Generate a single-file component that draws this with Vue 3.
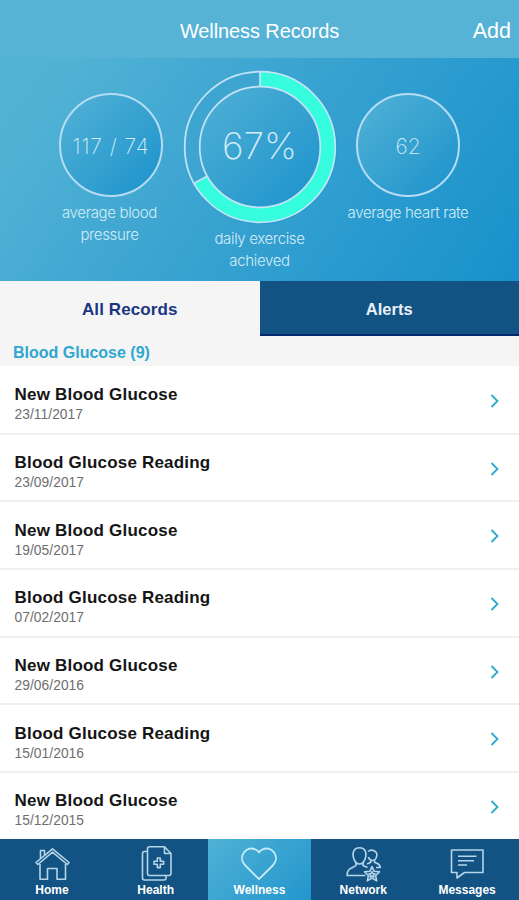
<template>
  <div class="app">
    <div class="top">
      <header class="header">
        <span></span>
        <h1>Wellness Records</h1>
        <a class="header__add">Add</a>
      </header>
      <section class="stats">
        <div class="stat">
          <div class="stat__circle"><span class="stat__pressure">117 / 74</span></div>
          <p class="stat__pressure-label">average blood<br />pressure</p>
        </div>
        <div class="stat stat--main">
          <div class="stat__ring">
            <svg viewBox="0 0 154 154" width="154" height="154" fill="none">
              <circle
                cx="77"
                cy="77"
                r="68"
                stroke="#35fddd"
                stroke-width="15"
                pathLength="100"
                :stroke-dasharray="`${exercise} 100`"
                transform="rotate(-90 77 77)"
              />
              <g stroke="#c4e4f6" stroke-width="1.7">
                <circle cx="77" cy="77" r="75.3" />
                <circle cx="77" cy="77" r="60.3" />
                <path d="M77 2V17" />
                <path d="M77 2V17" :transform="`rotate(${exercise * 3.6} 77 77)`" />
              </g>
            </svg>
            <span>{{ exercise }}%</span>
          </div>
          <p>daily exercise<br />achieved</p>
        </div>
        <div class="stat">
          <div class="stat__circle"><span>62</span></div>
          <p>average heart rate</p>
        </div>
      </section>
    </div>

    <div class="tabs">
      <div class="tabs__item tabs__item--active">All Records</div>
      <div class="tabs__item">Alerts</div>
    </div>

    <h2 class="group">Blood Glucose (9)</h2>
    <ul class="records">
      <li v-for="record in records" :key="record.date">
        <div>
          <h3>{{ record.title }}</h3>
          <p>{{ record.date }}</p>
        </div>
        <svg width="10" height="16" viewBox="0 0 10 16" fill="none" stroke="#2ba9cd" stroke-width="1.8">
          <path d="M1.5 2L7.5 8L1.5 14" />
        </svg>
      </li>
    </ul>

    <nav class="nav">
      <a
        v-for="item in nav"
        :key="item.name"
        class="nav__item"
        :class="{ 'nav__item--active': item.name == active }"
      >
        <svg width="40" height="38" viewBox="0 0 40 38">
          <path v-for="d in item.paths" :key="d" :d="d" />
        </svg>
        <span>{{ item.name }}</span>
      </a>
    </nav>
  </div>
</template>

<script setup>
import { ref } from "vue";

const exercise = ref(67);
const active = ref("Wellness");

const records = [
  { title: "New Blood Glucose", date: "23/11/2017" },
  { title: "Blood Glucose Reading", date: "23/09/2017" },
  { title: "New Blood Glucose", date: "19/05/2017" },
  { title: "Blood Glucose Reading", date: "07/02/2017" },
  { title: "New Blood Glucose", date: "29/06/2016" },
  { title: "Blood Glucose Reading", date: "15/01/2016" },
  { title: "New Blood Glucose", date: "15/12/2015" },
];

const nav = [
  {
    name: "Home",
    paths: [
      "M8 19V34.3H15.5V23.5H25V34.3H33.5V19",
      "M4 17.5L20.5 3.8L37 17.5L35.3 19.5L20.5 7.2L5.8 19.5Z",
      "M8.5 13.5V5.5H12.5V10",
    ],
  },
  {
    name: "Health",
    paths: [
      "M13.5 1.8H28.5L35 8.5V28.5Q35 30.5 33 30.5H13.5Q11.5 30.5 11.5 28.5V3.8Q11.5 1.8 13.5 1.8Z",
      "M28.5 1.8V8.5H35",
      "M11.5 6.5H8.5Q6.5 6.5 6.5 8.5V33Q6.5 35 8.5 35H28Q30 35 30 33V30.5",
      "M21.3 13H24.3V16.3H27.6V19.3H24.3V22.6H21.3V19.3H18V16.3H21.3Z",
    ],
  },
  {
    name: "Wellness",
    paths: ["M20 34.2L5.8 20C-2 11.5 8 -0.5 17 4.8Q19 5.8 20 7.5Q21 5.8 23 4.8C32 -0.5 42 11.5 34.2 20Z"],
  },
  {
    name: "Network",
    paths: [
      "M16.5 2.8C22 2.8 23.6 7 22.8 11.5C22 15.5 20 19 16.5 19C13 19 11 15.5 10.2 11.5C9.4 7 11 2.8 16.5 2.8Z",
      "M13 18V20.5C9.5 23.5 4.3 22.5 4 30.5H22.5M20 18V20.5L24.5 22.5",
      "M25 6.5C28.5 3.5 34.5 6 33.8 10.5C33.3 13.5 32 15.5 29.5 15.5C27.3 15.5 26 14 25.4 12",
      "M27.8 15V17.2L24 19M31.5 15V17.2C34.5 19 37 18.5 37.3 22.5H33",
      "M29 21.5L31.2 26.3L36.5 26.9L32.6 30.5L33.7 35.8L29 33.1L24.3 35.8L25.4 30.5L21.5 26.9L26.8 26.3Z",
      "M29 26.5L29.9 28.5L32 28.8L30.4 30.2L30.9 32.2L29 31.1L27.1 32.2L27.6 30.2L26 28.8L28.1 28.5Z",
    ],
  },
  {
    name: "Messages",
    paths: [
      "M4.5 5H36V27.5H17.5L10 33V27.5H4.5Z",
      "M11 11.3H29.5M11 15.7H27M11 20H20",
    ],
  },
];
</script>

<style>
body {
  margin: 0;
}
</style>

<style scoped>
.app {
  display: flex;
  flex-direction: column;
  width: 519px;
  height: 900px;
  overflow: hidden;
  background: #fff;
  font-family: "Liberation Sans", Arial, sans-serif;
}
h1,
h2,
h3,
p,
ul {
  margin: 0;
  padding: 0;
}
.top {
  flex: none;
  height: 281px;
  background: linear-gradient(125deg, #52b3d5 0%, #51b2d5 16%, #3da5d1 45%, #2c9ccf 70%, #1791cb 100%);
}
.header {
  display: grid;
  grid-template-columns: 1fr auto 1fr;
  align-items: center;
  height: 58px;
  padding: 5px 8px 0;
  box-sizing: border-box;
  background: #57b3d6;
  color: #fff;
}
.header h1 {
  font-size: 20px;
  font-weight: 400;
  letter-spacing: -0.1px;
}
.header__add {
  justify-self: end;
  font-size: 21.5px;
}
.stats {
  display: grid;
  grid-template-columns: repeat(3, 148.5px);
  justify-content: center;
  color: #d4ecf8;
}
.stat {
  display: flex;
  flex-direction: column;
  align-items: center;
  padding-top: 35px;
}
.stat--main {
  padding-top: 12px;
}
.stat__circle {
  display: flex;
  align-items: center;
  justify-content: center;
  width: 104px;
  height: 104px;
  padding-top: 2px;
  box-sizing: border-box;
  border: 2px solid #b4dcf2;
  border-radius: 50%;
  background: linear-gradient(135deg, #4aadd4 15%, #2497cd 85%);
  font-family: Inter, sans-serif;
  font-size: 21px;
  font-weight: 200;
}
.stat__pressure {
  letter-spacing: 0.9px;
}
.stat__ring {
  display: grid;
  place-items: center;
  width: 154px;
  height: 154px;
  border-radius: 50%;
  background: radial-gradient(circle, transparent 60px, #3ea5d1 61px, #3ea5d1 75px, transparent 76px),
    linear-gradient(135deg, #4aadd4 20%, #2296cd 80%);
  font-family: Inter, sans-serif;
  font-size: 37px;
  font-weight: 200;
}
.stat__ring > * {
  grid-area: 1 / 1;
}
.stat__ring span {
  padding-bottom: 3px;
}
.stat p {
  margin-top: 5px;
  font-family: Inter, sans-serif;
  font-size: 15px;
  font-weight: 300;
  line-height: 21.5px;
  letter-spacing: -0.35px;
  text-align: center;
  white-space: nowrap;
}
.stat--main p {
  margin-top: 4px;
}
.stat .stat__pressure-label {
  padding-right: 3px;
}
.tabs {
  display: flex;
  flex: none;
  height: 55px;
}
.tabs__item {
  display: flex;
  flex: 1;
  align-items: center;
  justify-content: center;
  box-sizing: border-box;
  border-bottom: 2px solid #03286d;
  padding-top: 4px;
  background: #135383;
  color: #e8f0fa;
  font-size: 16.5px;
  font-weight: 700;
}
.tabs__item--active {
  border-color: #f5f5f5;
  background: #f5f5f5;
  color: #1b3580;
  font-size: 17px;
  letter-spacing: 0.1px;
}
.group {
  flex: none;
  height: 30px;
  padding-left: 13px;
  background: #f5f5f5;
  color: #2ea7d1;
  font-size: 16px;
  line-height: 33px;
}
.records {
  flex: 1;
  min-height: 0;
  padding-top: 1px;
  overflow: hidden;
  list-style: none;
}
.records li {
  display: flex;
  align-items: center;
  justify-content: space-between;
  height: 67.7px;
  padding: 2px 19.5px 0 14.5px;
  box-sizing: border-box;
  border-bottom: 2px solid #efefef;
}
.records li > div {
  padding-top: 8px;
}
.records h3 {
  color: #151515;
  font-size: 17px;
  line-height: 20px;
  letter-spacing: 0.2px;
}
.records p {
  color: #6e6e6e;
  font-size: 13.8px;
  line-height: 19px;
  letter-spacing: 0.05px;
}
.nav {
  display: grid;
  flex: none;
  grid-template-columns: repeat(5, 1fr);
  height: 61px;
  background: #135383;
  color: #fff;
}
.nav__item {
  display: flex;
  flex-direction: column;
  align-items: center;
  padding-top: 6px;
  font-size: 12px;
  font-weight: 700;
  line-height: 14px;
}
.nav__item--active {
  background: linear-gradient(135deg, #4fb1d5, #2396cd);
}
.nav__item svg {
  flex: none;
  fill: none;
  stroke: #b4d5ea;
  stroke-width: 1.6;
  stroke-linejoin: round;
}
.nav__item--active svg {
  stroke: #c9ecf7;
  stroke-width: 1.8;
}
</style>
